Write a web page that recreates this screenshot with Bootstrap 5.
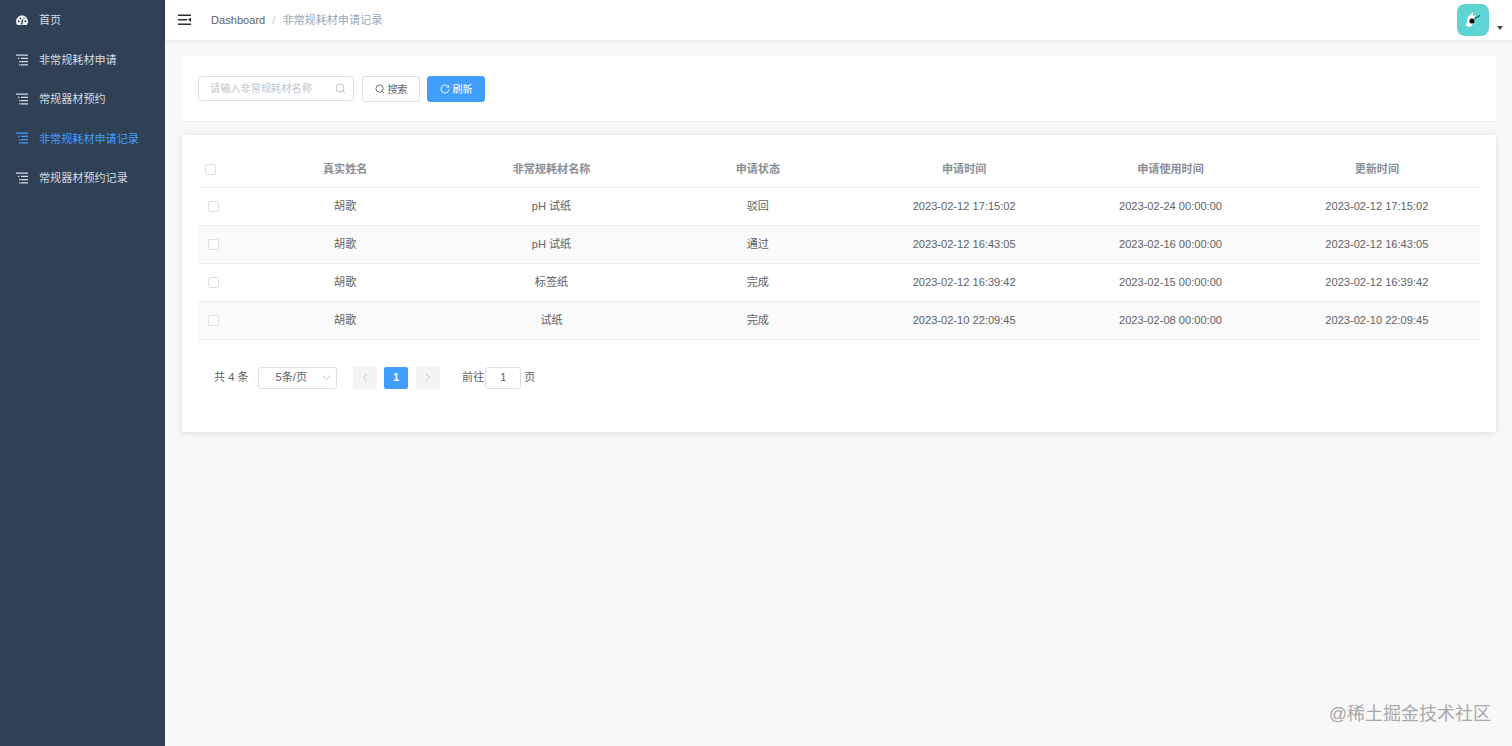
<!DOCTYPE html>
<html lang="zh-CN">

<head>
    <meta charset="UTF-8">
    <title>非常规耗材申请记录</title>
    <link href="https://cdn.jsdelivr.net/npm/bootstrap@5.3.0/dist/css/bootstrap.min.css" rel="stylesheet">
    <style>
        html, body {
            height: 100%;
            overflow: hidden;
        }

        body {
            font-family: "Liberation Sans", "Noto Sans CJK SC", sans-serif;
            font-size: 11.1px;
            color: #606266;
            background: #f8f8f9;
        }

        .app-wrap {
            height: 746px;
        }

        .side-menu {
            width: 165px;
            background: #304156;
            color: #ccd4dc;
            flex-shrink: 0;
            padding-top: 1px;
        }

        .side-item {
            height: 39.4px;
            padding-left: 16px;
            gap: 11px;
            color: #d5dbe2;
        }

        .side-item.is-active {
            color: #409eff;
        }

        .side-item svg {
            width: 12px;
            height: 13px;
            flex-shrink: 0;
        }

        .top-bar {
            height: 40px;
            background: #fff;
            box-shadow: 0 1px 3px rgba(0, 21, 41, .1);
            padding-left: 13px;
            padding-right: 9px;
        }

        .crumb-main {
            color: #606266;
            margin-left: 20px;
        }

        .crumb-sep {
            color: #c0c4cc;
            margin: 0 7px;
        }

        .crumb-now {
            color: #97a8be;
        }

        .avatar-box {
            width: 32px;
            height: 32px;
            border-radius: 8px;
            background: #5fd4d4;
            margin-top: 4px;
        }

        .avatar-caret {
            width: 0;
            height: 0;
            border: 3px solid transparent;
            border-top: 4px solid #4a4a4a;
            border-bottom: 0;
            margin: 26px 0 0 8px;
        }

        .page-body {
            padding: 16px 16px 0 17px;
        }

        .panel-search {
            height: 66px;
            background: #fff;
            border-bottom: 1px solid #eceef0;
            padding: 20px 16px 0;
            margin-bottom: 13px;
            gap: 7px;
        }

        .search-box {
            width: 156px;
            height: 25px;
            border: 1px solid #dcdfe6;
            border-radius: 3px;
            padding: 0 7px 0 11px;
            color: #c0c4cc;
            font-size: 10.2px;
            margin-right: 1px;
        }

        .btn-plain,
        .btn-blue {
            height: 26px;
            width: 58px;
            border-radius: 3px;
            font-size: 10px;
            gap: 3px;
        }

        .btn-plain {
            background: #fff;
            border: 1px solid #dcdfe6;
            color: #606266;
        }

        .btn-blue {
            background: #409eff;
            border: 1px solid #409eff;
            color: #fff;
        }

        .panel-table {
            height: 297px;
            background: #fff;
            border-radius: 3px;
            box-shadow: 0 1px 6px rgba(0, 0, 0, .12);
            padding: 15px 16px 0;
        }

        .rec-table {
            width: 100%;
            table-layout: fixed;
            border-collapse: collapse;
            text-align: center;
        }

        .rec-table th,
        .rec-table td {
            border-bottom: 1px solid #ebeef5;
            padding: 0;
            font-weight: 400;
            vertical-align: middle;
        }

        .rec-table th {
            height: 37px;
            padding-top: 2px;
            color: #8a8e96;
            font-weight: 700;
        }

        .rec-table td {
            height: 38px;
            color: #606266;
        }

        .rec-table tr.row-alt td {
            background: #fafafa;
        }

        .col-check {
            width: 44px;
        }

        .check-mark {
            display: block;
            width: 11px;
            height: 11px;
            border: 1px solid #dcdfe6;
            border-radius: 2px;
            background: #fff;
            margin-left: 10px;
        }

        th .check-mark {
            margin-left: 7px;
        }

        .pager-row {
            margin-top: 26px;
            padding-left: 16px;
            height: 24px;
        }

        .size-select {
            width: 79px;
            height: 22px;
            border: 1px solid #dcdfe6;
            border-radius: 3px;
            padding: 0 5px 0 17px;
            margin-left: 9px;
            margin-right: 16px;
        }

        .page-btn {
            width: 24px;
            height: 22px;
            background: #f4f4f5;
            border-radius: 2px;
            color: #c0c4cc;
            margin-right: 7.5px;
        }

        .page-btn.is-current {
            background: #409eff;
            color: #fff;
            font-weight: 700;
        }

        .jump-input {
            width: 36px;
            height: 22px;
            border: 1px solid #dcdfe6;
            border-radius: 3px;
            margin: 0 3px 0 1px;
        }

        .jump-label {
            margin-left: 15px;
        }

        .juejin-mark {
            position: absolute;
            right: 21px;
            bottom: 20px;
            font-size: 18px;
            color: #a9a9a9;
            line-height: 1.2;
        }
    </style>
</head>

<body>
    <div class="app-wrap d-flex position-relative">
        <!-- 侧边栏 -->
        <div class="side-menu">
            <div class="side-item d-flex align-items-center">
                <svg viewBox="0 0 12 13"><path fill="#eef1f4" d="M6 1.500C2.700 1.500 0 4.200 0 7.500c0 1.300.4 2.500 1.100 3.500h9.800c.7-1 1.100-2.200 1.100-3.500 0-3.300-2.700-6-6-6z"/><circle cx="2.600" cy="7.200" r="1" fill="#304156"/><circle cx="9.400" cy="7.200" r="1" fill="#304156"/><circle cx="4.300" cy="4.300" r=".9" fill="#304156"/><circle cx="8" cy="4.300" r=".7" fill="#304156"/><path stroke="#304156" stroke-width="1.400" d="M5.600 10.500 6.600 5.500"/></svg>
                <span>首页</span>
            </div>
            <div class="side-item d-flex align-items-center">
                <svg viewBox="0 0 12 13" fill="currentColor"><path d="M0 .5h12v1.300H0zM2 3.700h1.500V5H2zM5 3.700h7V5H5zM3 7h1.500v1.300H3zM5 7h7v1.300H5zM3 10.300h1.500v1.300H3zM5 10.300h7v1.300H5z"/></svg>
                <span>非常规耗材申请</span>
            </div>
            <div class="side-item d-flex align-items-center">
                <svg viewBox="0 0 12 13" fill="currentColor"><path d="M0 .5h12v1.300H0zM2 3.700h1.500V5H2zM5 3.700h7V5H5zM3 7h1.500v1.300H3zM5 7h7v1.300H5zM3 10.300h1.500v1.300H3zM5 10.300h7v1.300H5z"/></svg>
                <span>常规器材预约</span>
            </div>
            <div class="side-item is-active d-flex align-items-center">
                <svg viewBox="0 0 12 13" fill="currentColor"><path d="M0 .5h12v1.300H0zM2 3.700h1.500V5H2zM5 3.700h7V5H5zM3 7h1.500v1.300H3zM5 7h7v1.300H5zM3 10.300h1.500v1.300H3zM5 10.300h7v1.300H5z"/></svg>
                <span>非常规耗材申请记录</span>
            </div>
            <div class="side-item d-flex align-items-center">
                <svg viewBox="0 0 12 13" fill="currentColor"><path d="M0 .5h12v1.300H0zM2 3.700h1.500V5H2zM5 3.700h7V5H5zM3 7h1.500v1.300H3zM5 7h7v1.300H5zM3 10.300h1.500v1.300H3zM5 10.300h7v1.300H5z"/></svg>
                <span>常规器材预约记录</span>
            </div>
        </div>

        <div class="flex-grow-1 d-flex flex-column">
            <!-- 顶部栏 -->
            <div class="top-bar d-flex align-items-start">
                <div class="d-flex align-items-center h-100">
                    <svg width="13" height="12" viewBox="0 0 13 12" fill="#2b2f36"><path d="M0 .5h13v1.600H0zM0 5h9v1.600H0zM0 9.500h13v1.600H0zM13 3.600v4.400L10 5.800z"/></svg>
                    <span class="crumb-main">Dashboard</span>
                    <span class="crumb-sep">/</span>
                    <span class="crumb-now">非常规耗材申请记录</span>
                </div>
                <div class="d-flex ms-auto">
                    <div class="avatar-box d-flex align-items-center justify-content-center">
                        <svg width="20" height="20" viewBox="0 0 20 20"><path fill="#fff" d="M10 2 5 7l-1 4-1 5 4 1 3-3 2-3-2-2 3-4-3 1z"/><circle cx="9" cy="11" r="2.600" fill="#111"/><path stroke="#222" d="m12 8.500 5-3"/></svg>
                    </div>
                    <div class="avatar-caret"></div>
                </div>
            </div>

            <div class="page-body">
                <!-- 搜索 -->
                <div class="panel-search d-flex align-items-start">
                    <div class="search-box d-flex align-items-center justify-content-between">
                        <span>请输入非常规耗材名称</span>
                        <svg width="11" height="11" viewBox="0 0 11 11" fill="none" stroke="#c0c4cc"><circle cx="5" cy="5" r="4"/><path d="m8 8 2 2"/></svg>
                    </div>
                    <button type="button" class="btn-plain d-flex align-items-center justify-content-center p-0">
                        <svg width="10" height="10" viewBox="0 0 11 11" fill="none" stroke="#606266"><circle cx="5" cy="5" r="4"/><path d="m8 8 2 2"/></svg>
                        <span>搜索</span>
                    </button>
                    <button type="button" class="btn-blue d-flex align-items-center justify-content-center p-0 ms-0">
                        <svg width="10" height="10" viewBox="0 0 10 10" fill="none" stroke="#fff"><path d="M8.500 3A4 4 0 1 0 9 5.500"/><path d="M8.800 1v2.300H6.500" stroke-width=".8"/></svg>
                        <span>刷新</span>
                    </button>
                </div>

                <!-- 表格 -->
                <div class="panel-table">
                    <table class="rec-table">
                        <thead>
                            <tr>
                                <th class="col-check"><span class="check-mark"></span></th>
                                <th>真实姓名</th>
                                <th>非常规耗材名称</th>
                                <th>申请状态</th>
                                <th>申请时间</th>
                                <th>申请使用时间</th>
                                <th>更新时间</th>
                            </tr>
                        </thead>
                        <tbody>
                            <tr>
                                <td><span class="check-mark"></span></td>
                                <td>胡歌</td>
                                <td>pH 试纸</td>
                                <td>驳回</td>
                                <td>2023-02-12 17:15:02</td>
                                <td>2023-02-24 00:00:00</td>
                                <td>2023-02-12 17:15:02</td>
                            </tr>
                            <tr class="row-alt">
                                <td><span class="check-mark"></span></td>
                                <td>胡歌</td>
                                <td>pH 试纸</td>
                                <td>通过</td>
                                <td>2023-02-12 16:43:05</td>
                                <td>2023-02-16 00:00:00</td>
                                <td>2023-02-12 16:43:05</td>
                            </tr>
                            <tr>
                                <td><span class="check-mark"></span></td>
                                <td>胡歌</td>
                                <td>标签纸</td>
                                <td>完成</td>
                                <td>2023-02-12 16:39:42</td>
                                <td>2023-02-15 00:00:00</td>
                                <td>2023-02-12 16:39:42</td>
                            </tr>
                            <tr class="row-alt">
                                <td><span class="check-mark"></span></td>
                                <td>胡歌</td>
                                <td>试纸</td>
                                <td>完成</td>
                                <td>2023-02-10 22:09:45</td>
                                <td>2023-02-08 00:00:00</td>
                                <td>2023-02-10 22:09:45</td>
                            </tr>
                        </tbody>
                    </table>

                    <!-- 分页 -->
                    <div class="pager-row d-flex align-items-center">
                        <span>共 4 条</span>
                        <div class="size-select d-flex align-items-center justify-content-between">
                            <span>5条/页</span>
                            <svg width="9" height="6" viewBox="0 0 9 6" fill="none" stroke="#c0c4cc"><path d="m1 1 3.500 3.500L8 1"/></svg>
                        </div>
                        <div class="page-btn d-flex align-items-center justify-content-center">
                            <svg width="6" height="9" viewBox="0 0 6 9" fill="none" stroke="#c0c4cc"><path d="M5 1 1.500 4.500 5 8"/></svg>
                        </div>
                        <div class="page-btn is-current d-flex align-items-center justify-content-center">1</div>
                        <div class="page-btn d-flex align-items-center justify-content-center">
                            <svg width="6" height="9" viewBox="0 0 6 9" fill="none" stroke="#c0c4cc"><path d="m1 1 3.500 3.500L1 8"/></svg>
                        </div>
                        <span class="jump-label">前往</span>
                        <div class="jump-input d-flex align-items-center justify-content-center">1</div>
                        <span>页</span>
                    </div>
                </div>
            </div>
        </div>

        <div class="juejin-mark">@稀土掘金技术社区</div>
    </div>

    <script src="https://cdn.jsdelivr.net/npm/bootstrap@5.3.0/dist/js/bootstrap.bundle.min.js"></script>
</body>

</html>
